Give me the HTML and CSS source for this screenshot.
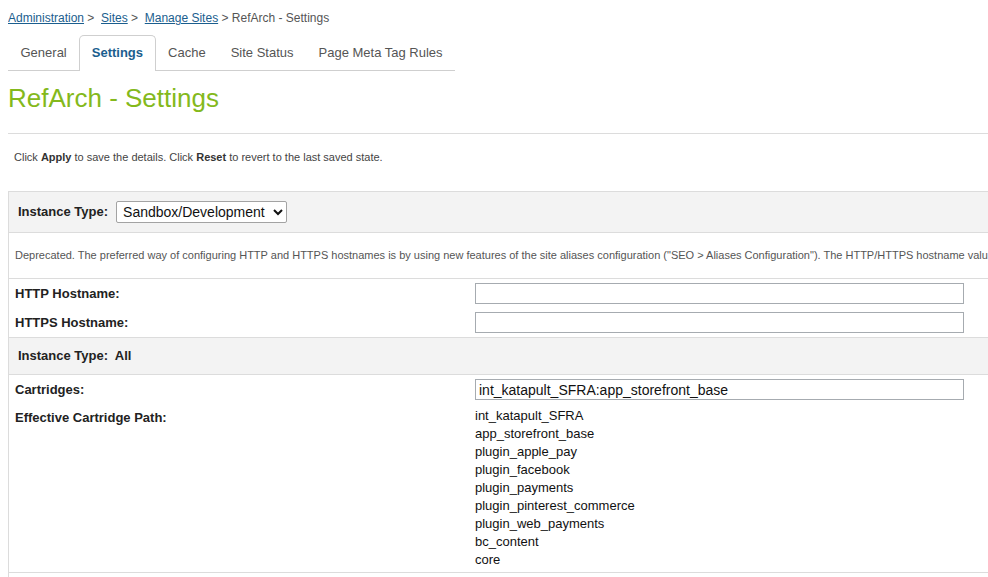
FILE: index.html
```html
<!DOCTYPE html>
<html>
<head>
<meta charset="utf-8">
<meta name="viewport" content="width=device-width, initial-scale=1">
<title>RefArch - Settings</title>
<link rel="stylesheet" href="styles.css">
</head>
<body>
<div class="page">
  <nav class="crumbs"><a href="#">Administration</a> &gt;&nbsp; <a href="#">Sites</a> &gt;&nbsp; <a href="#">Manage Sites</a> &gt; <span>RefArch - Settings</span></nav>
  <ul class="tabs">
    <li class="tab">General</li>
    <li class="tab active">Settings</li>
    <li class="tab">Cache</li>
    <li class="tab">Site Status</li>
    <li class="tab">Page Meta Tag Rules</li>
  </ul>
  <h1 class="title">RefArch - Settings</h1>
  <hr class="rule">
  <p class="hint">Click <b>Apply</b> to save the details. Click <b>Reset</b> to revert to the last saved state.</p>

  <div class="panel">
    <div class="row head">
      <span class="head-label">Instance Type:</span>
      <select class="select">
        <option>Sandbox/Development</option>
        <option>Staging</option>
        <option>Production</option>
      </select>
    </div>
    <div class="row note">Deprecated. The preferred way of configuring HTTP and HTTPS hostnames is by using new features of the site aliases configuration ("SEO &gt; Aliases Configuration"). The HTTP/HTTPS hostname values configured here are only used if no alias configuration exists.</div>
    <div class="row group">
      <div class="field">
        <label class="label">HTTP Hostname:</label>
        <input class="input" type="text" value="">
      </div>
      <div class="field">
        <label class="label">HTTPS Hostname:</label>
        <input class="input" type="text" value="">
      </div>
    </div>
    <div class="row head head-all">
      <span class="head-label">Instance Type:&nbsp; All</span>
    </div>
    <div class="row group">
      <div class="field">
        <label class="label">Cartridges:</label>
        <input class="input" type="text" value="int_katapult_SFRA:app_storefront_base">
      </div>
      <div class="field field-top">
        <span class="label label-top">Effective Cartridge Path:</span>
        <ul class="paths">
          <li>int_katapult_SFRA</li>
          <li>app_storefront_base</li>
          <li>plugin_apple_pay</li>
          <li>plugin_facebook</li>
          <li>plugin_payments</li>
          <li>plugin_pinterest_commerce</li>
          <li>plugin_web_payments</li>
          <li>bc_content</li>
          <li>core</li>
        </ul>
      </div>
    </div>
    <div class="row spacer"></div>
  </div>
</div>
</body>
</html>
```
FILE: styles.css
```css
html {
  overflow: hidden;
}
body {
  margin: 8px 0 8px 8px;
  font-family: "Liberation Sans", Arial, sans-serif;
  color: #222;
  background: #fff;
}
.page {
  overflow: hidden;
}
.crumbs {
  height: 24px;
  padding-top: 3px;
  font-size: 12px;
  line-height: 14px;
  color: #555;
}
.crumbs a {
  color: #1b5e8e;
  text-decoration: underline;
}
.tabs {
  display: inline-flex;
  list-style: none;
  margin: 0;
  padding: 0;
  border-bottom: 1px solid #cfcfcf;
  vertical-align: top;
}
.tab {
  padding: 0 11.5px 1px;
  margin-bottom: -1px;
  border: 1px solid transparent;
  border-bottom: 0;
  font-size: 13px;
  line-height: 34px;
  color: #555;
}
.tab.active {
  background: #fff;
  border-color: #cfcfcf;
  border-radius: 5px 5px 0 0;
  font-weight: bold;
  color: #1b5e8e;
}
.title {
  margin: 12px 0 0;
  font-size: 26px;
  font-weight: normal;
  line-height: 30px;
  color: #84b91c;
}
.rule {
  margin: 20px 0 0;
  height: 0;
  border: 0;
  border-top: 1px solid #dcdcdc;
}
.hint {
  margin: 17px 0 27px;
  padding-left: 6px;
  font-size: 11px;
  line-height: 13px;
  color: #444;
}
.hint b {
  color: #333;
}
.panel {
  border-left: 1px solid #dcdcdc;
  border-top: 1px solid #dcdcdc;
}
.row {
  border-bottom: 1px solid #dcdcdc;
}
.head {
  display: flex;
  align-items: center;
  gap: 8px;
  padding: 9px 9px;
  background: #f3f3f3;
  min-height: 22px;
}
.head-all {
  padding: 9px 9px;
  min-height: 18px;
}
.head-label {
  font-size: 13px;
  font-weight: bold;
  line-height: 18px;
  color: #222;
}
.select {
  height: 22px;
  width: 171px;
  margin: 0;
  padding: 0 2px;
  font-family: "Liberation Sans", Arial, sans-serif;
  font-size: 14px;
  color: #111;
  border: 1px solid #a3a3a3;
  border-radius: 2px;
  background: #fff;
}
.note {
  padding: 16px 6px;
  font-size: 11px;
  line-height: 13px;
  color: #555;
  white-space: nowrap;
  overflow: hidden;
}
.group {
  padding: 0;
}
.field {
  display: flex;
  align-items: center;
  padding: 4px 0 4px 6px;
}
.field-top {
  align-items: flex-start;
  padding: 3px 0 3px 6px;
}
.label {
  width: 460px;
  flex: none;
  font-size: 13px;
  font-weight: bold;
  line-height: 18px;
  color: #222;
}
.label-top {
  padding-top: 2px;
}
.input {
  box-sizing: border-box;
  width: 489px;
  height: 21px;
  margin: 0;
  padding: 0 3px;
  font-family: "Liberation Sans", Arial, sans-serif;
  font-size: 14px;
  color: #111;
  border: 1px solid #a6abb0;
  background: #fff;
}
.paths {
  list-style: none;
  margin: 0;
  padding: 0;
  font-size: 13px;
  line-height: 18px;
  color: #111;
}
.spacer {
  height: 30px;
  border-bottom: 0;
}
```
